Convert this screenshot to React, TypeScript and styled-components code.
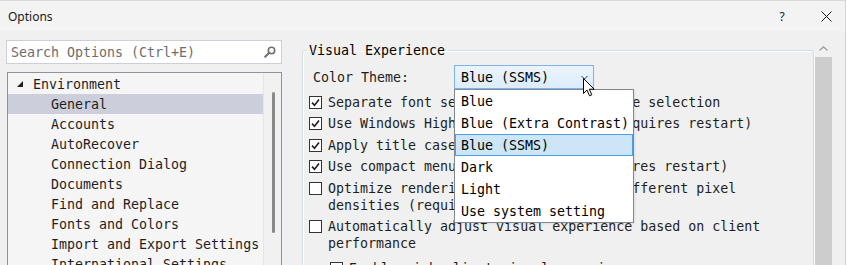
import styled, { createGlobalStyle } from 'styled-components';

const GlobalStyle = createGlobalStyle`
  html, body {
    margin: 0;
    background: #ffffff;
    overflow: hidden;
  }
`;

const MONO = `"DejaVu Sans Mono", "Liberation Mono", monospace`;

const Window = styled.div`
  width: 846px;
  height: 265px;
  box-sizing: border-box;
  background: #f0f0f0;
  border-top: 1px solid #dadada;
  border-right: 1px solid #d2d2d2;
  display: flex;
  flex-direction: column;
  overflow: hidden;
  font-family: ${MONO};
  font-size: 13.3px;
  color: #1e1e1e;
`;

const TitleBar = styled.div`
  height: 30px;
  flex: none;
  display: flex;
  align-items: center;
  padding-left: 8px;
  background: #f3f3f3;
  font-family: "Noto Sans", "Open Sans", sans-serif;
  font-size: 12px;
  color: #1a1a1a;
`;

const Title = styled.span`
  flex: 1;
`;

const TitleButton = styled.div<{ $w: number }>`
  width: ${(p) => p.$w}px;
  height: 30px;
  display: flex;
  align-items: center;
  justify-content: center;
`;

const Body = styled.div`
  flex: 1;
  display: flex;
  padding: 9px 0 0 6px;
  min-height: 0;
`;

const LeftColumn = styled.div`
  width: 276px;
  display: flex;
  flex-direction: column;
  gap: 8px;
`;

const SearchBox = styled.div`
  height: 24px;
  flex: none;
  box-sizing: border-box;
  border: 1px solid #cccedb;
  background: #ffffff;
  display: flex;
  align-items: center;
  padding: 0 5px 0 4px;
`;

const Placeholder = styled.span`
  flex: 1;
  color: #6d6d6d;
`;

const Tree = styled.div`
  flex: 1;
  min-height: 0;
  overflow: hidden;
  margin-left: 1px;
  border: 1px solid #8f9299;
  border-bottom: none;
  background: #f5f5f5;
  display: flex;
`;

const TreeList = styled.div`
  flex: 1;
  padding-top: 1px;
`;

const TreeRow = styled.div<{ $level: number; $selected?: boolean }>`
  height: 20px;
  display: flex;
  align-items: center;
  white-space: nowrap;
  padding-left: ${(p) => (p.$level === 0 ? 9 : 43)}px;
  background: ${(p) => (p.$selected ? '#cccedb' : 'transparent')};
`;

const Expander = styled.svg`
  width: 6px;
  height: 6px;
  margin-right: 10px;
`;

const TreeScroll = styled.div`
  width: 18px;
  border-left: 1px solid #e4e4e4;
  background: #f1f1f1;
  display: flex;
  justify-content: center;
  padding-top: 19px;
  box-sizing: border-box;
`;

const TreeThumb = styled.div`
  width: 3px;
  height: 141px;
  border-radius: 2px;
  background: #8a8a8a;
  margin-left: 1px;
`;

const RightPanel = styled.div`
  display: flex;
  align-items: flex-start;
  margin-left: 20px;
`;

const GroupBox = styled.fieldset`
  width: 512px;
  height: 260px;
  box-sizing: border-box;
  margin: 1.5px 0 0 0;
  padding: 0 0 0 4px;
  border: 1px solid #d3dce3;
  border-radius: 3px;
  box-shadow: inset 1px 1px 0 #ffffff, 1px 1px 0 #ffffff;
`;

const Legend = styled.legend`
  padding: 0 2px;
  line-height: 17px;
  color: #000000;
`;

const ThemeRow = styled.div`
  display: flex;
  align-items: center;
  margin-top: 6.5px;
  padding-left: 6px;
`;

const ThemeLabel = styled.span`
  width: 141px;
`;

const Combo = styled.div`
  position: relative;
  width: 140px;
  height: 24px;
  box-sizing: border-box;
  border: 1px solid #7eb4ea;
  background: linear-gradient(#ecf4fc, #dcecfc);
  display: flex;
  align-items: center;
  padding-left: 6px;
  color: #000000;
`;

const ComboText = styled.span`
  flex: 1;
`;

const Chevron = styled.svg`
  position: absolute;
  left: 126px;
  top: 9px;
  width: 7px;
  height: 5px;
`;

const Cursor = styled.svg`
  position: absolute;
  left: 128px;
  top: 12px;
  width: 13px;
  height: 19px;
  z-index: 3;
`;

const DropList = styled.div`
  position: absolute;
  left: -1px;
  top: 23px;
  width: 180px;
  box-sizing: border-box;
  border: 1px solid #828790;
  background: #ffffff;
  z-index: 2;
  box-shadow: 1px 1px 2px rgba(0, 0, 0, 0.08);
`;

const DropItem = styled.div<{ $selected?: boolean }>`
  height: 22px;
  box-sizing: border-box;
  display: flex;
  align-items: center;
  padding-left: 5px;
  white-space: nowrap;
  color: #000000;
  border: 1px solid ${(p) => (p.$selected ? '#4c9fe0' : 'transparent')};
  background: ${(p) => (p.$selected ? '#cce6f7' : 'transparent')};
`;

const CheckList = styled.div`
  display: flex;
  flex-direction: column;
  gap: 4.6px;
  margin-top: 4.5px;
  padding-left: 2px;
`;

const CheckRow = styled.div<{ $nested?: boolean }>`
  display: flex;
  align-items: flex-start;
  line-height: 17px;
  margin-left: ${(p) => (p.$nested ? 21 : 0)}px;
  margin-top: ${(p) => (p.$nested ? 3 : 0)}px;
`;

const Box = styled.div`
  width: 13px;
  height: 13px;
  flex: none;
  box-sizing: border-box;
  border: 1px solid #333333;
  background: #ffffff;
  margin: 2px 6px 0 0;
  display: flex;
  align-items: center;
  justify-content: center;
`;

const CheckText = styled.span`
  max-width: 484px;
`;

const Scrollbar = styled.div`
  width: 17px;
  margin-left: 1px;
  display: flex;
  flex-direction: column;
`;

const ScrollArrow = styled.div`
  height: 17px;
  display: flex;
  align-items: center;
  justify-content: center;
`;

const ScrollThumb = styled.div`
  height: 220px;
  background: #cdcdcd;
`;

const treeItems = [
  'General',
  'Accounts',
  'AutoRecover',
  'Connection Dialog',
  'Documents',
  'Find and Replace',
  'Fonts and Colors',
  'Import and Export Settings',
  'International Settings',
];

const themes = ['Blue', 'Blue (Extra Contrast)', 'Blue (SSMS)', 'Dark', 'Light', 'Use system setting'];

const options = [
  { text: 'Separate font settings from color theme selection', checked: true },
  { text: 'Use Windows High Contrast settings (requires restart)', checked: true },
  { text: 'Apply title case styling to menu bar', checked: true },
  { text: 'Use compact menu and search bar (requires restart)', checked: true },
  { text: 'Optimize rendering for screens with different pixel densities (requires restart)', checked: false },
  { text: 'Automatically adjust visual experience based on client performance', checked: false },
  { text: 'Enable rich client visual experience', checked: false, nested: true },
];

const Check = () => (
  <svg width="9" height="9" viewBox="0 0 9 9">
    <path d="M1 4.6 L3.5 7.2 L8 1.4" fill="none" stroke="#1e1e1e" strokeWidth="1.6" />
  </svg>
);

export default function App() {
  return (
    <>
      <GlobalStyle />
      <Window>
        <TitleBar>
          <Title>Options</Title>
          <TitleButton $w={50}>?</TitleButton>
          <TitleButton $w={38}>
            <svg width="11" height="11" viewBox="0 0 11 11">
              <path d="M0.5 0.5 L10.5 10.5 M10.5 0.5 L0.5 10.5" stroke="#1a1a1a" strokeWidth="1" />
            </svg>
          </TitleButton>
        </TitleBar>
        <Body>
          <LeftColumn>
            <SearchBox>
              <Placeholder>Search Options (Ctrl+E)</Placeholder>
              <svg width="12" height="12" viewBox="0 0 12 12">
                <circle cx="7.5" cy="4.5" r="3.2" fill="none" stroke="#6f6f6f" strokeWidth="1.6" />
                <path d="M5.2 6.8 L1.2 10.8" stroke="#6f6f6f" strokeWidth="2" strokeLinecap="round" />
              </svg>
            </SearchBox>
            <Tree>
              <TreeList>
                <TreeRow $level={0}>
                  <Expander viewBox="0 0 6 6">
                    <path d="M6 0 L6 6 L0 6 Z" fill="#1e1e1e" />
                  </Expander>
                  Environment
                </TreeRow>
                {treeItems.map((item, i) => (
                  <TreeRow key={item} $level={1} $selected={i === 0}>
                    {item}
                  </TreeRow>
                ))}
              </TreeList>
              <TreeScroll>
                <TreeThumb />
              </TreeScroll>
            </Tree>
          </LeftColumn>
          <RightPanel>
            <GroupBox>
              <Legend>Visual Experience</Legend>
              <ThemeRow>
                <ThemeLabel>Color Theme:</ThemeLabel>
                <Combo>
                  <ComboText>Blue (SSMS)</ComboText>
                  <Chevron viewBox="0 0 7 5">
                    <path d="M0.5 1 L3.5 4 L6.5 1" fill="none" stroke="#333" strokeWidth="1" />
                  </Chevron>
                  <Cursor viewBox="0 0 13 19">
                    <path
                      d="M0.5 0.5 L0.5 15.5 L4 12 L6.5 17.8 L8.8 16.8 L6.3 11.2 L11.2 11.2 Z"
                      fill="#ffffff"
                      stroke="#000000"
                      strokeWidth="1"
                      strokeLinejoin="round"
                    />
                  </Cursor>
                  <DropList>
                    {themes.map((t) => (
                      <DropItem key={t} $selected={t === 'Blue (SSMS)'}>
                        {t}
                      </DropItem>
                    ))}
                  </DropList>
                </Combo>
              </ThemeRow>
              <CheckList>
                {options.map((o) => (
                  <CheckRow key={o.text} $nested={o.nested}>
                    <Box>{o.checked && <Check />}</Box>
                    <CheckText>{o.text}</CheckText>
                  </CheckRow>
                ))}
              </CheckList>
            </GroupBox>
            <Scrollbar>
              <ScrollArrow>
                <svg width="9" height="5" viewBox="0 0 9 5">
                  <path d="M0.5 4.5 L4.5 0.8 L8.5 4.5" fill="none" stroke="#9a9a9a" strokeWidth="1.2" />
                </svg>
              </ScrollArrow>
              <ScrollThumb />
            </Scrollbar>
          </RightPanel>
        </Body>
      </Window>
    </>
  );
}
